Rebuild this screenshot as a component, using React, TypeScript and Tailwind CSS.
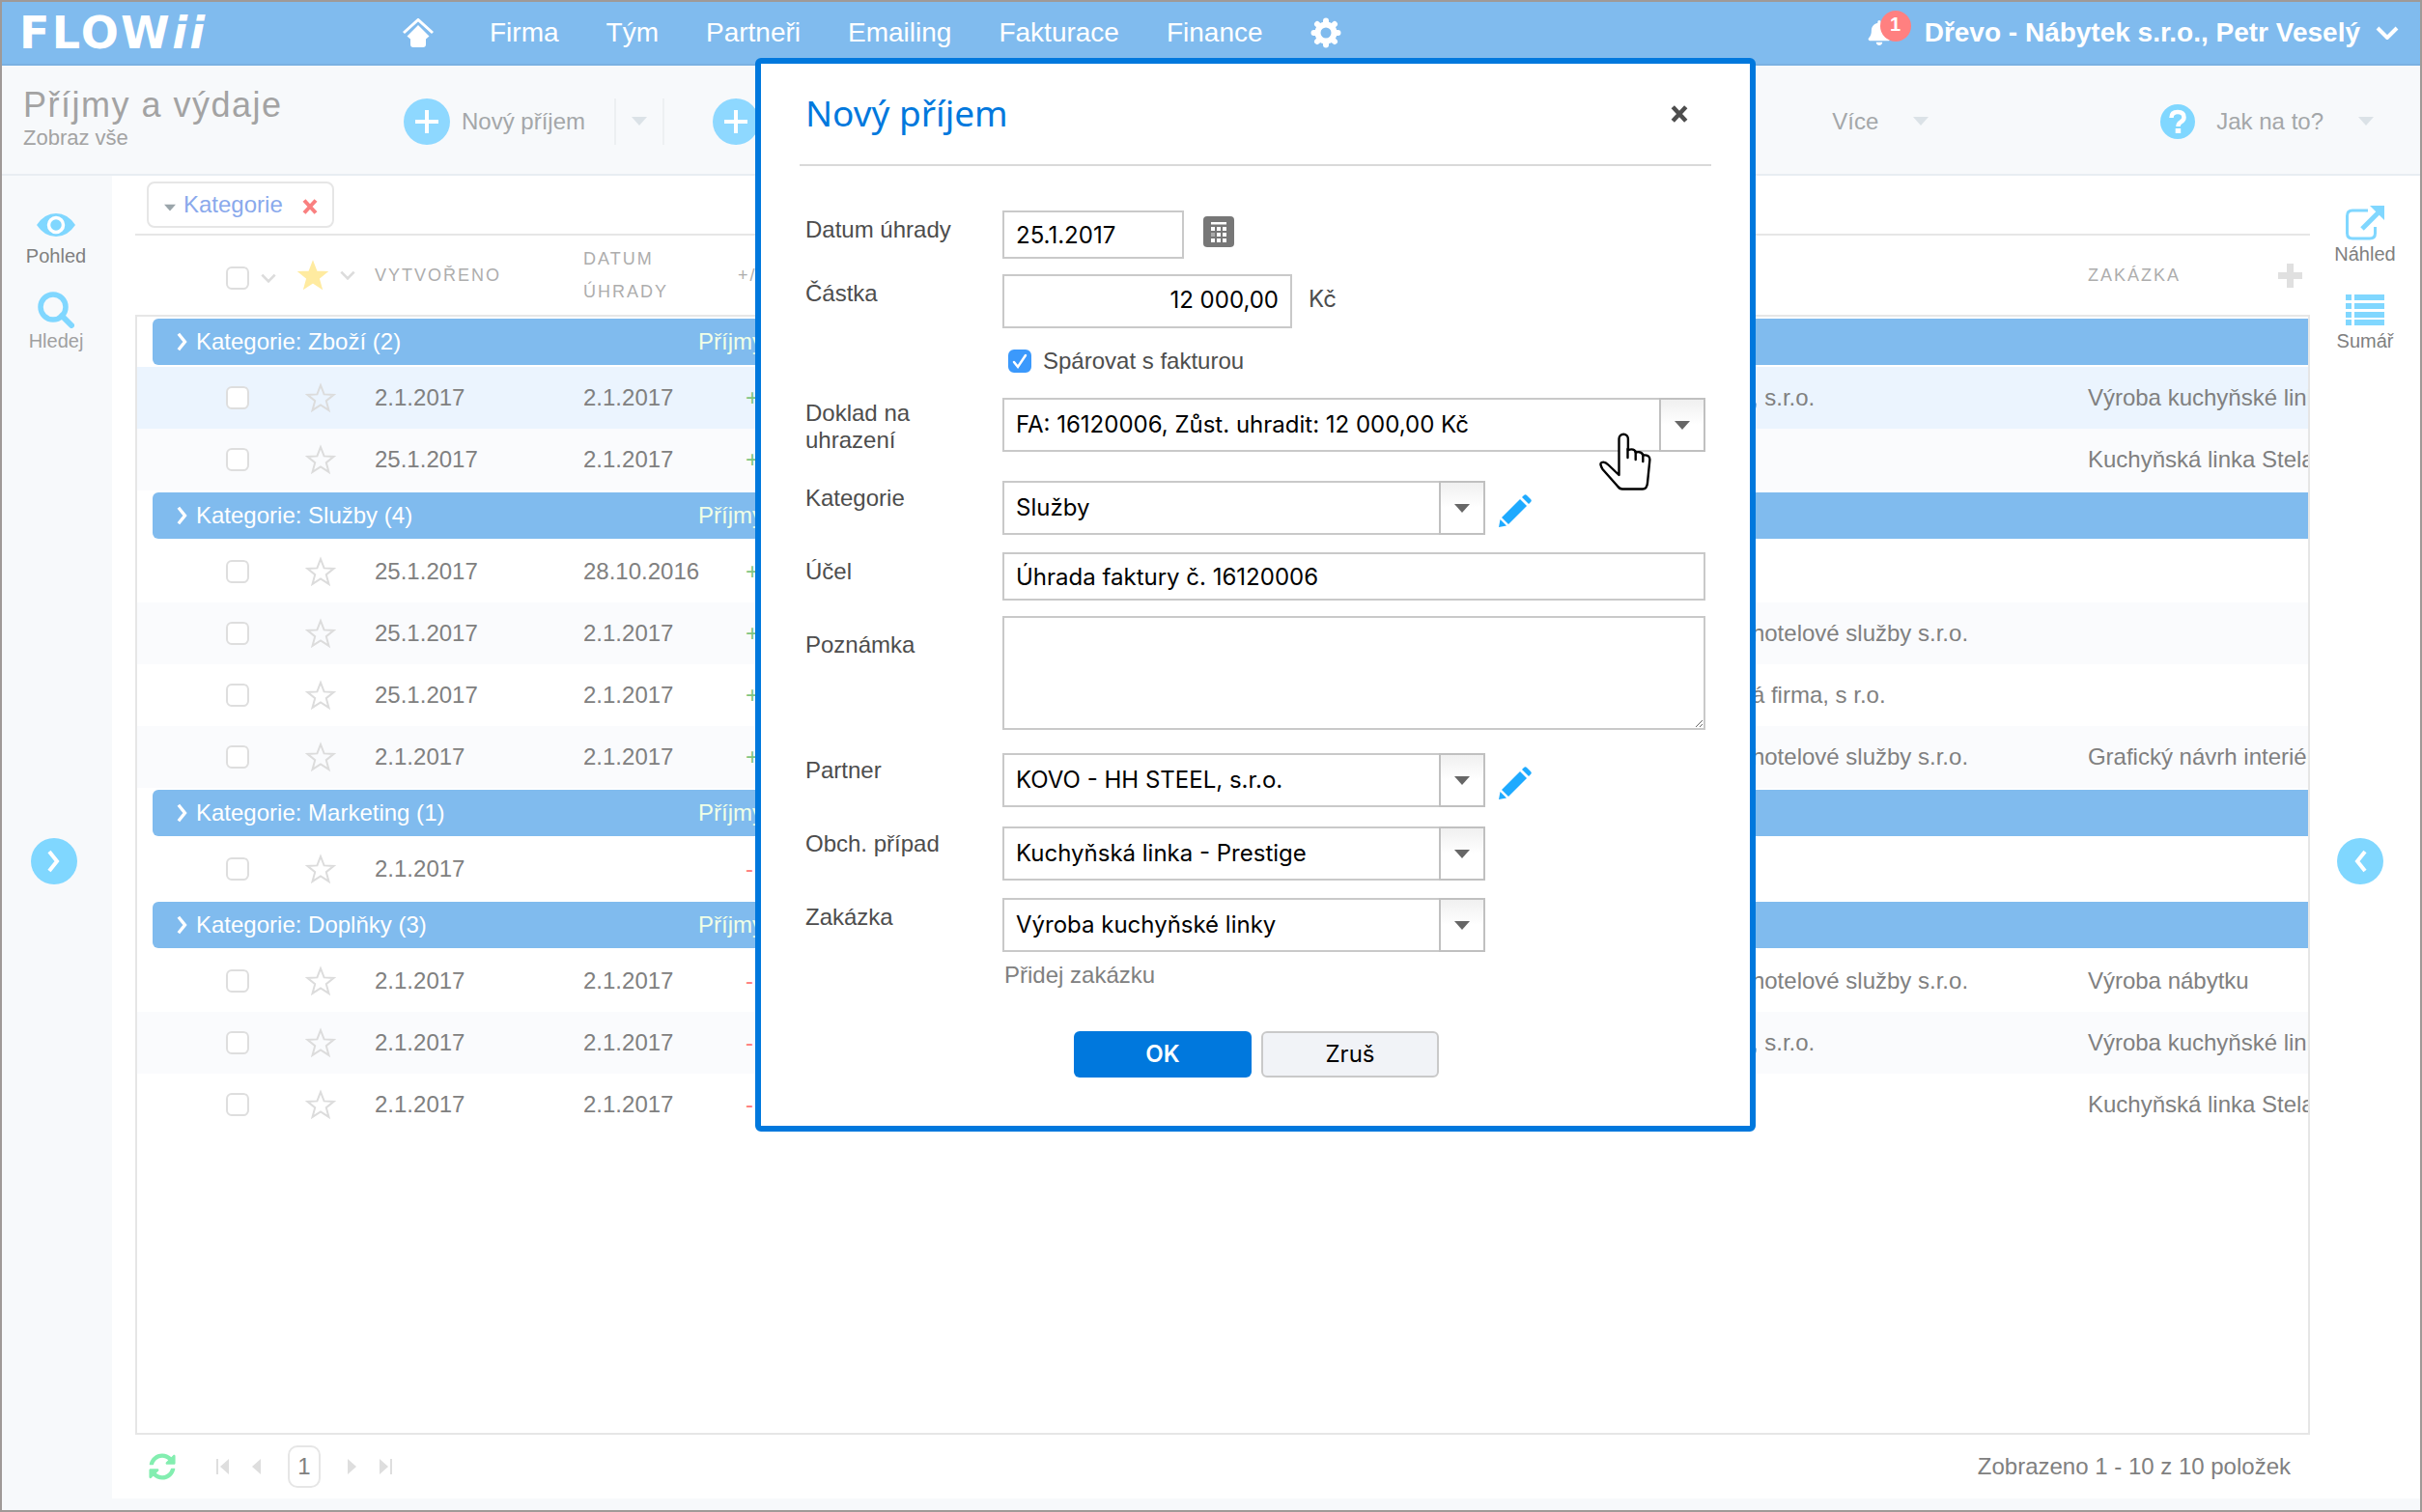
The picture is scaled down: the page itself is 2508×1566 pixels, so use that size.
import { useState } from 'react';
import { FaBell, FaSyncAlt } from 'react-icons/fa';
import clsx from 'clsx';

const NAV = ['Firma', 'Tým', 'Partneři', 'Emailing', 'Fakturace', 'Finance'];

interface Row {
  created: string;
  paid?: string;
  sign: '+' | '-';
  partner?: string;
  order?: string;
}

interface Group {
  name: string;
  rows: Row[];
}

const GROUPS: Group[] = [
  {
    name: 'Zboží',
    rows: [
      { created: '2.1.2017', paid: '2.1.2017', sign: '+', partner: ', s.r.o.', order: 'Výroba kuchyňské linky' },
      { created: '25.1.2017', paid: '2.1.2017', sign: '+', order: 'Kuchyňská linka Stela' },
    ],
  },
  {
    name: 'Služby',
    rows: [
      { created: '25.1.2017', paid: '28.10.2016', sign: '+' },
      { created: '25.1.2017', paid: '2.1.2017', sign: '+', partner: 'hotelové služby s.r.o.' },
      { created: '25.1.2017', paid: '2.1.2017', sign: '+', partner: 'á firma, s r.o.' },
      { created: '2.1.2017', paid: '2.1.2017', sign: '+', partner: 'hotelové služby s.r.o.', order: 'Grafický návrh interiéru' },
    ],
  },
  {
    name: 'Marketing',
    rows: [{ created: '2.1.2017', sign: '-' }],
  },
  {
    name: 'Doplňky',
    rows: [
      { created: '2.1.2017', paid: '2.1.2017', sign: '-', partner: 'hotelové služby s.r.o.', order: 'Výroba nábytku' },
      { created: '2.1.2017', paid: '2.1.2017', sign: '-', partner: ', s.r.o.', order: 'Výroba kuchyňské linky' },
      { created: '2.1.2017', paid: '2.1.2017', sign: '-', order: 'Kuchyňská linka Stela' },
    ],
  },
];

function Caret({ className }: { className?: string }) {
  return (
    <svg viewBox="0 0 16 9" className={clsx('shrink-0', className)} fill="currentColor">
      <path d="M0 0h16L8 9z" />
    </svg>
  );
}

function Chevron({ className }: { className?: string }) {
  return (
    <svg viewBox="0 0 24 14" className={clsx('shrink-0', className)} fill="none" stroke="currentColor" strokeWidth="4">
      <path d="M2 2l10 10L22 2" />
    </svg>
  );
}

function AngleIcon({ className }: { className?: string }) {
  return (
    <svg viewBox="0 0 14 24" className={clsx('shrink-0', className)} fill="none" stroke="currentColor" strokeWidth="4">
      <path d="M2 2l8 10L2 22" />
    </svg>
  );
}

function Star({ filled, className }: { filled?: boolean; className?: string }) {
  return (
    <svg viewBox="0 0 32 32" className={className} fill={filled ? 'currentColor' : 'none'} stroke="currentColor" strokeWidth="2">
      <path d="M16 3l3.6 9.4 10 .5-7.800 6.300 2.700 9.700L16 23.400l-8.500 5.500 2.700-9.700-7.800-6.300 10-.5z" />
    </svg>
  );
}

function PlusCircle() {
  return (
    <svg viewBox="0 0 48 48" className="size-12 shrink-0">
      <circle cx="24" cy="24" r="24" fill="#8ed8ff" />
      <path d="M24 12v24M12 24h24" stroke="#fff" strokeWidth="4" />
    </svg>
  );
}

function GearIcon() {
  return (
    <svg viewBox="0 0 32 32" className="size-8" fill="none" stroke="#fff">
      <circle cx="16" cy="16" r="8.500" strokeWidth="6" />
      <path
        d="M16 5V3.500M16 27v1.500M5 16H3.500M27 16h1.500M8.200 8.200L7 7M23.800 23.800L25 25M8.200 23.800L7 25M23.800 8.200L25 7"
        strokeWidth="6"
        strokeLinecap="round"
      />
    </svg>
  );
}

function CrossIcon({ className }: { className?: string }) {
  return (
    <svg viewBox="0 0 16 16" className={className} stroke="currentColor" strokeWidth="4">
      <path d="M2 1.500l12 13M14 1.500L2 14.500" />
    </svg>
  );
}

function PencilIcon() {
  return (
    <svg viewBox="0 0 34 34" className="size-[34px]" fill="#1eaaff">
      <path d="M3 24l7 7L29 12l-7-7z" />
      <path d="M24 3l2-2q1.500-1.500 3 0l4 4q1.500 1.500 0 3l-2 2z" />
      <path d="M1.500 26L0 34l8-1.500z" />
    </svg>
  );
}

function HandCursor() {
  return (
    <svg
      viewBox="0 0 54 60"
      className="pointer-events-none absolute top-[382px] left-[868px] h-[60px] w-[54px]"
      fill="#fff"
      stroke="#000"
      strokeWidth="2.4"
      strokeLinejoin="round"
      strokeLinecap="round"
    >
      <path d="M20.500 44V6.500a4.700 4.700 0 0 1 9.400 0V18q6.500-2 8 2.500 6-1.500 7.500 3 7-.8 7 4.500L50 52q-.5 6.500-5 6.500H24q-3 0-5-3L3.500 38Q0 32 2.500 31q3-1.500 7 2.500z" />
      <path d="M29.500 17v9M37.700 20v8M45.300 23v7" fill="none" />
    </svg>
  );
}

function TopBar() {
  return (
    <header className="flex h-[66px] items-center border-b-2 border-[#7ab1e2] bg-[#80bbee] pr-[22px] pl-[18px] text-[28px] text-white">
      <a href="#" className="w-[397px] font-['DejaVu_Sans'] text-[46px] leading-none font-bold tracking-wider">
        FLOW<span className="italic">ii</span>
      </a>
      <a href="#" aria-label="Domů">
        <svg viewBox="0 0 32 30" className="h-[30px] w-8" fill="#fff">
          <path d="M1 15L16 1.500 31 15" fill="none" stroke="#fff" strokeWidth="3" />
          <path d="M16 7L4.500 18.500l3.500 3V27q0 3 3 3h10q3 0 3-3v-5.500l3.500-3z" />
        </svg>
      </a>
      <nav className="ml-[58px] flex items-center gap-[49px]">
        {NAV.map((item) => (
          <a key={item} href="#">
            {item}
          </a>
        ))}
        <button type="button" aria-label="Nastavení">
          <GearIcon />
        </button>
      </nav>
      <div className="ml-auto flex items-center">
        <button type="button" className="relative mr-[34px]" aria-label="Upozornění">
          <FaBell className="size-[26px]" />
          <span className="absolute -top-2.5 left-3.5 flex size-8 items-center justify-center rounded-full bg-[#ff8080] pb-1 text-xl leading-none font-bold">
            1
          </span>
        </button>
        <button type="button" className="flex items-center gap-4 font-bold">
          Dřevo - Nábytek s.r.o., Petr Veselý
          <Chevron className="h-3.5 w-6" />
        </button>
      </div>
    </header>
  );
}

function Toolbar() {
  return (
    <div className="flex h-[114px] items-center border-b-2 border-[#e8edf2] bg-[#f7f9fb] pt-[3px] pr-12 pl-[22px] text-2xl text-[#a4a7a9]">
      <div className="w-[394px] pb-1.5">
        <h1 className="text-4xl tracking-[1.5px] text-[#a3a3a3]">Příjmy a výdaje</h1>
        <a href="#" className="block text-[22px] leading-7 text-[#a3a3a3]">
          Zobraz vše
        </a>
      </div>
      <button type="button" className="flex items-center gap-3">
        <PlusCircle />
        Nový příjem
      </button>
      <button type="button" aria-label="Další možnosti" className="ml-[30px] flex h-12 w-[52px] items-center justify-center border-x-2 border-[#edf0f2] text-[#dbe2e7]">
        <Caret className="h-[9px] w-4" />
      </button>
      <button type="button" aria-label="Přidat" className="ml-[50px]">
        <PlusCircle />
      </button>
      <button type="button" className="ml-auto flex items-center gap-9">
        Více
        <Caret className="h-[9px] w-4 text-[#dbe2e7]" />
      </button>
      <button type="button" className="ml-60 flex items-center">
        <svg viewBox="0 0 36 36" className="mr-[22px] size-9">
          <circle cx="18" cy="18" r="18" fill="#80d7ff" />
          <path d="M11.500 14q0-6 6.500-6t6.500 5.500q0 3-3.200 4.800Q18.500 20 18.500 23" fill="none" stroke="#fff" strokeWidth="4.500" />
          <path d="M15.700 25h5.500v5h-5.500z" fill="#fff" />
        </svg>
        Jak na to?
        <Caret className="ml-9 h-[9px] w-4 text-[#dbe2e7]" />
      </button>
    </div>
  );
}

function LeftSide() {
  return (
    <aside className="flex w-[114px] shrink-0 flex-col items-center bg-[#f7f9fb] pt-[31px] pr-0.5 text-xl leading-6">
      <button type="button" className="text-[#808080]">
        <span className="flex h-10 items-center justify-center">
          <svg viewBox="0 0 40 24" className="h-6 w-10">
            <path d="M0 12Q8 0 20 0t20 12Q32 24 20 24T0 12z" fill="#80d7ff" />
            <circle cx="20" cy="12" r="7.500" fill="#80d7ff" stroke="#fff" strokeWidth="3.500" />
          </svg>
        </span>
        Pohled
      </button>
      <button type="button" className="mt-6 text-[#a0a0a0]">
        <span className="flex h-10 items-center justify-center">
          <svg viewBox="0 0 38 38" className="size-[38px]" fill="none" stroke="#80d7ff">
            <circle cx="16" cy="16" r="13" strokeWidth="5.500" />
            <path d="M25 25l10 10" strokeWidth="6" strokeLinecap="round" />
          </svg>
        </span>
        Hledej
      </button>
      <button type="button" aria-label="Rozbalit" className="mt-[503px] mr-1 flex size-12 items-center justify-center rounded-full bg-[#80d7ff] text-white">
        <AngleIcon className="h-6 w-3.5" />
      </button>
    </aside>
  );
}

function RightSide() {
  return (
    <aside className="flex w-[114px] shrink-0 flex-col items-center pt-[29px] text-xl leading-6 text-[#808080]">
      <button type="button">
        <span className="flex h-10 items-center justify-center">
          <svg viewBox="0 0 40 36" className="h-9 w-10" fill="none" stroke="#80d7ff">
            <path d="M23 5H7Q1.500 5 1.500 10.500v18Q1.500 34 7 34h18q5.500 0 5.500-5.500V22" strokeWidth="3" />
            <path d="M17 24L35 6" strokeWidth="5" />
            <path d="M25 0h15v15z" fill="#80d7ff" stroke="none" />
          </svg>
        </span>
        Náhled
      </button>
      <button type="button" className="mt-[26px]">
        <span className="flex h-10 items-center justify-center">
          <svg viewBox="0 0 40 32" className="h-8 w-10" fill="#80d7ff">
            <path d="M0 0h6v6H0zM9 0h31v6H9zM0 9h6v6H0zM9 9h31v6H9zM0 18h6v6H0zM9 18h31v6H9zM0 26h6v6H0zM9 26h31v6H9z" />
          </svg>
        </span>
        Sumář
      </button>
      <button type="button" aria-label="Sbalit" className="mt-[503px] mr-2.5 flex size-12 rotate-180 items-center justify-center rounded-full bg-[#80d7ff] text-white">
        <AngleIcon className="h-6 w-3.5" />
      </button>
    </aside>
  );
}

function Columns() {
  return (
    <colgroup>
      <col className="w-40" />
      <col className="w-[74px]" />
      <col className="w-[216px]" />
      <col className="w-40" />
      <col />
      <col className="w-[348px]" />
      <col className="w-60" />
    </colgroup>
  );
}

function RowCheckbox({ label }: { label: string }) {
  return (
    <input
      type="checkbox"
      aria-label={label}
      className="block size-6 shrink-0 appearance-none rounded-md border-2 border-[#dedede] bg-white checked:bg-[#80bbee]"
    />
  );
}

function GridHeader() {
  return (
    <div className="border-b-2 border-[#e6e6e6] px-0.5">
      <table className="w-full table-fixed text-left">
        <Columns />
        <thead className="text-lg leading-[34px] tracking-[2px] text-[#adadad]">
          <tr className="h-[82px]">
            <th className="pl-[92px]">
              <span className="flex items-center gap-3 pt-1.5 text-[#dcdcdc]">
                <RowCheckbox label="Vybrat vše" />
                <Chevron className="h-2.5 w-4" />
              </span>
            </th>
            <th className="pl-1.5">
              <span className="flex items-center gap-3 text-[#dcdcdc]">
                <Star filled className="size-8 shrink-0 text-[#ffeba0]" />
                <Chevron className="h-2.5 w-4" />
              </span>
            </th>
            <th className="pl-3 font-normal">VYTVOŘENO</th>
            <th className="pl-3 font-normal">
              DATUM
              <br />
              ÚHRADY
            </th>
            <th className="pl-3 font-normal">+/-</th>
            <th />
            <th className="pl-3 font-normal">
              <span className="flex items-center justify-between pr-1.5">
                ZAKÁZKA
                <button type="button" aria-label="Přidat sloupec">
                  <svg viewBox="0 0 25 25" className="size-[25px]" stroke="#e0e0e0" strokeWidth="7">
                    <path d="M12.500 0v25M0 12.500h25" />
                  </svg>
                </button>
              </span>
            </th>
          </tr>
        </thead>
      </table>
    </div>
  );
}

function GridBody() {
  return (
    <table className="w-full table-fixed text-2xl text-[#808080]">
      <Columns />
      {GROUPS.map((group, g) => (
        <tbody key={group.name}>
          <tr>
            <td colSpan={7} className="py-0.5 pl-4">
              <button type="button" className="flex h-12 w-full items-center rounded-l-md bg-[#80bbee] pl-[25px] text-left text-white">
                <AngleIcon className="h-5 w-3" />
                <span className="ml-2 w-[520px]">
                  Kategorie: {group.name} ({group.rows.length})
                </span>
                <span className="text-[#f0ffe6]">Příjmy</span>
              </button>
            </td>
          </tr>
          {group.rows.map((row, i) => (
            <tr key={i} className={clsx('h-16', g === 0 && i === 0 ? 'bg-[#ebf4fe]' : i % 2 === 1 && 'bg-[#fafbfd]')}>
              <td className="pl-[92px]">
                <RowCheckbox label="Vybrat řádek" />
              </td>
              <td className="pl-3.5">
                <Star className="size-8 text-[#dcdcdc]" />
              </td>
              <td className="pl-3">{row.created}</td>
              <td className="pl-3">{row.paid}</td>
              <td className={clsx('pl-5', row.sign === '+' ? 'text-[#7fc57f]' : 'text-[#ff8080]')}>{row.sign}</td>
              <td className="pl-3">{row.partner}</td>
              <td className="overflow-hidden pl-3 whitespace-nowrap">{row.order}</td>
            </tr>
          ))}
        </tbody>
      ))}
    </table>
  );
}

function Pager() {
  return (
    <footer className="flex h-[66px] items-center pr-5 pl-3.5 text-2xl text-[#808080]">
      <button type="button" aria-label="Obnovit">
        <FaSyncAlt className="size-7 text-[#83eeb0]" />
      </button>
      <div className="ml-[42px] flex items-center text-[#dedede]">
        <button type="button" aria-label="První">
          <svg viewBox="0 0 13 16" className="h-4 w-[13px]" fill="currentColor">
            <path d="M0 0h2v16H0zM13 0v16L4 8z" />
          </svg>
        </button>
        <button type="button" aria-label="Předchozí" className="ml-6">
          <svg viewBox="0 0 9 16" className="h-4 w-[9px]" fill="currentColor">
            <path d="M9 0v16L0 8z" />
          </svg>
        </button>
        <button type="button" className="mx-7 flex h-11 w-[34px] items-center justify-center rounded-[10px] border-2 border-[#e6e6e6] text-[#808080]">
          1
        </button>
        <button type="button" aria-label="Další">
          <svg viewBox="0 0 9 16" className="h-4 w-[9px]" fill="currentColor">
            <path d="M0 0v16l9-8z" />
          </svg>
        </button>
        <button type="button" aria-label="Poslední" className="ml-6">
          <svg viewBox="0 0 13 16" className="h-4 w-[13px]" fill="currentColor">
            <path d="M11 0h2v16h-2zM0 0v16l9-8z" />
          </svg>
        </button>
      </div>
      <span className="ml-auto">Zobrazeno 1 - 10 z 10 položek</span>
    </footer>
  );
}

interface ComboProps {
  id: string;
  value: string;
  wide?: boolean;
}

function Combo({ id, value, wide }: ComboProps) {
  return (
    <div className={clsx('relative', wide ? 'w-[728px]' : 'w-[500px]')}>
      <select
        id={id}
        defaultValue={value}
        className="block h-14 w-full appearance-none border-2 border-[#c9c9c9] bg-white pr-14 pl-3 font-['Inter',sans-serif] text-2xl text-black"
      >
        <option>{value}</option>
      </select>
      <span className="pointer-events-none absolute inset-y-0 right-0 flex w-12 items-center justify-center border-2 border-[#c0c0c0] bg-linear-to-b from-[#f0f0f0] to-white to-50% text-[#666]">
        <Caret className="h-[9px] w-4" />
      </span>
    </div>
  );
}

const LABEL = 'w-[204px] shrink-0 leading-7 text-[#4d4d4d]';
const INPUT = "border-2 border-[#c9c9c9] bg-white px-3 font-['Inter',sans-serif] text-black";

function IncomeDialog() {
  const [paired, setPaired] = useState(true);

  return (
    <div role="dialog" aria-labelledby="dialog-title" className="relative w-[1036px] rounded-md border-6 border-[#0078dd] bg-white px-10 pb-[50px] text-2xl">
      <div className="flex h-[106px] items-center justify-between border-b-2 border-[#d9d9d9] pr-6 pl-1.5">
        <h2 id="dialog-title" className="pb-0.5 font-['Noto_Sans',sans-serif] text-[37px] text-[#0078dd]">
          Nový příjem
        </h2>
        <button type="button" aria-label="Zavřít">
          <CrossIcon className="size-[18px] text-[#4d4d4d]" />
        </button>
      </div>

      <form className="pt-[46px] pl-1.5" onSubmit={(e) => e.preventDefault()}>
        <div className="flex items-start">
          <label htmlFor="date" className={clsx(LABEL, 'pt-1.5')}>
            Datum úhrady
          </label>
          <input id="date" defaultValue="25.1.2017" className={clsx(INPUT, 'h-[50px] w-[188px]')} />
          <button type="button" aria-label="Kalendář" className="mt-1.5 ml-5">
            <svg viewBox="0 0 32 32" className="size-8">
              <rect width="32" height="32" rx="4" fill="#777" />
              <path
                d="M8 6h16v2.500H8zM8 11h4v4H8zM14 11h4v4h-4zM20 11h4v4h-4zM14 17h4v4h-4zM20 17h4v4h-4zM8 23h4v4H8zM14 23h4v4h-4zM20 23h4v4h-4z"
                fill="#fff"
              />
              <path d="M8 17h4v4H8z" fill="#aaa" />
            </svg>
          </button>
        </div>

        <div className="mt-4 flex items-start">
          <label htmlFor="amount" className={clsx(LABEL, 'pt-1.5')}>
            Částka
          </label>
          <input id="amount" defaultValue="12 000,00" className={clsx(INPUT, 'h-14 w-[300px] pb-1 text-right')} />
          <span className="mt-3 ml-[17px] font-['Inter',sans-serif] leading-7 text-[#4d4d4d]">Kč</span>
        </div>

        <label className="mt-[22px] ml-[210px] flex h-6 items-center gap-3 text-[#4d4d4d]">
          <span className="relative">
            <input
              type="checkbox"
              checked={paired}
              onChange={(e) => setPaired(e.target.checked)}
              className="block size-6 appearance-none rounded-md border-2 border-[#c9c9c9] checked:border-[#3b99fc] checked:bg-[#3b99fc]"
            />
            <svg viewBox="0 0 24 24" className="pointer-events-none absolute inset-0 size-6" fill="none" stroke="#fff" strokeWidth="2.500">
              <path d="M6 13l4 5 8-12" strokeLinecap="round" />
            </svg>
          </span>
          Spárovat s fakturou
        </label>

        <div className="mt-[26px] flex items-start">
          <label htmlFor="document" className={clsx(LABEL, 'pt-0.5 pr-20')}>
            Doklad na uhrazení
          </label>
          <Combo id="document" value="FA: 16120006, Zůst. uhradit: 12 000,00 Kč" wide />
        </div>

        <div className="mt-7 flex items-start">
          <label htmlFor="category" className={clsx(LABEL, 'pt-1')}>
            Kategorie
          </label>
          <Combo id="category" value="Služby" />
          <button type="button" aria-label="Upravit kategorii" className="mt-3.5 ml-3.5">
            <PencilIcon />
          </button>
        </div>

        <div className="mt-[18px] flex items-start">
          <label htmlFor="purpose" className={clsx(LABEL, 'pt-1.5')}>
            Účel
          </label>
          <input id="purpose" defaultValue="Úhrada faktury č. 16120006" className={clsx(INPUT, 'h-[50px] w-[728px]')} />
        </div>

        <div className="mt-4 flex items-start">
          <label htmlFor="note" className={clsx(LABEL, 'pt-4')}>
            Poznámka
          </label>
          <textarea id="note" className={clsx(INPUT, 'block h-[118px] w-[728px]')} />
        </div>

        <div className="mt-6 flex items-start">
          <label htmlFor="partner" className={clsx(LABEL, 'pt-1')}>
            Partner
          </label>
          <Combo id="partner" value="KOVO - HH STEEL, s.r.o." />
          <button type="button" aria-label="Upravit partnera" className="mt-3.5 ml-3.5">
            <PencilIcon />
          </button>
        </div>

        <div className="mt-5 flex items-start">
          <label htmlFor="deal" className={clsx(LABEL, 'pt-1')}>
            Obch. případ
          </label>
          <Combo id="deal" value="Kuchyňská linka - Prestige" />
        </div>

        <div className="mt-[18px] flex items-start">
          <label htmlFor="order" className={clsx(LABEL, 'pt-1.5')}>
            Zakázka
          </label>
          <Combo id="order" value="Výroba kuchyňské linky" />
        </div>

        <a href="#" className="mt-2.5 ml-[206px] block w-fit leading-7 text-[#808080]">
          Přidej zakázku
        </a>

        <div className="mt-11 ml-[278px] flex gap-2.5 font-['Inter',sans-serif]">
          <button type="submit" className="h-12 w-[184px] rounded-md bg-[#0078dd] font-semibold text-white">
            OK
          </button>
          <button type="button" className="h-12 w-[184px] rounded-md border-2 border-[#c9c9c9] bg-[#f1f3f7] text-black">
            Zruš
          </button>
        </div>
      </form>
      <HandCursor />
    </div>
  );
}

export default function App() {
  return (
    <div className="relative flex min-h-screen flex-col border-2 border-[#9f9997] bg-white font-['Liberation_Sans',Arial,sans-serif]">
      <TopBar />
      <Toolbar />
      <div className="flex flex-1">
        <LeftSide />
        <div className="flex min-w-0 flex-1 flex-col">
          <main className="flex flex-1">
            <section className="ml-6 flex min-w-0 flex-1 flex-col">
              <div className="flex h-[62px] items-center border-b-2 border-[#e6e6e6] pl-3">
                <div className="flex h-12 items-center rounded-lg border-2 border-[#e6e6e6] pr-[15px] pl-4 text-2xl text-[#8aa9ec]">
                  <Caret className="mt-1.5 mr-2 h-2 w-3 text-[#9aa5aa]" />
                  <button type="button">Kategorie</button>
                  <button type="button" aria-label="Odebrat" className="mt-1 ml-5">
                    <CrossIcon className="size-4 text-[#f98080]" />
                  </button>
                </div>
              </div>
              <GridHeader />
              <div className="flex-1 border-2 border-t-0 border-[#e6e6e6]">
                <GridBody />
              </div>
              <Pager />
            </section>
            <RightSide />
          </main>
          <div className="h-3 bg-[#f7f9fb]" />
        </div>
      </div>

      <div className="absolute inset-x-0 top-[58px] flex justify-center pl-[92px]">
        <IncomeDialog />
      </div>
    </div>
  );
}
